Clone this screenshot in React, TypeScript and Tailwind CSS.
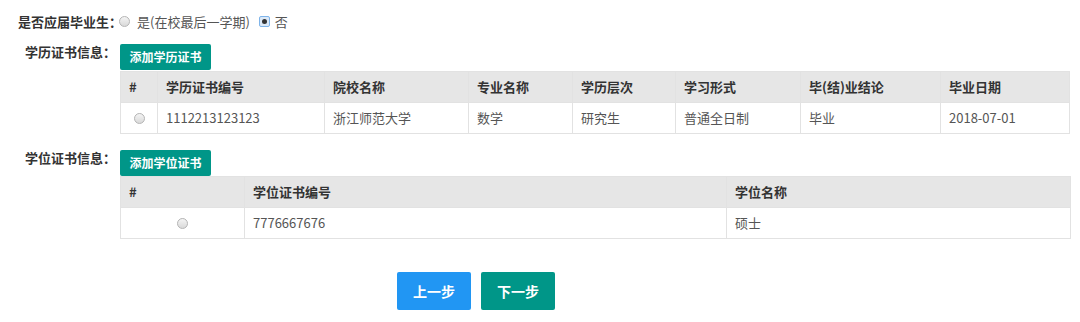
const font = { fontFamily: '"Noto Sans CJK SC", "Noto Sans", sans-serif' };

function Radio({ checked = false }: { checked?: boolean }) {
  if (checked) {
    return (
      <span className="inline-flex h-[11px] w-[11px] items-center justify-center rounded-[2px] border border-[#7eb4ea] bg-[#dce9f7]">
        <span className="h-[5px] w-[5px] rounded-full bg-[#333]" />
      </span>
    );
  }
  return (
    <span className="inline-block h-[11px] w-[11px] rounded-full border border-[#b5b5b5] bg-gradient-to-b from-[#f4f4f4] to-[#d9d9d9]" />
  );
}

function GreenButton({ children }: { children: React.ReactNode }) {
  return (
    <button className="flex h-[26px] w-[91px] items-center justify-center rounded-[2px] bg-[#009688] text-[12px] font-bold text-white">
      {children}
    </button>
  );
}

const eduCols = [
  { w: 37, t: "#" },
  { w: 167, t: "学历证书编号" },
  { w: 144, t: "院校名称" },
  { w: 104, t: "专业名称" },
  { w: 103, t: "学历层次" },
  { w: 125, t: "学习形式" },
  { w: 140, t: "毕(结)业结论" },
  { w: 129, t: "毕业日期" },
];
const eduRow = ["1112213123123", "浙江师范大学", "数学", "研究生", "普通全日制", "毕业", "2018-07-01"];

export default function App() {
  return (
    <div className="h-[322px] w-[1080px] bg-white text-[13px] text-[#333]" style={font}>
      <div className="flex h-[44px] items-center pb-[1px] pl-[18px]">
        <span className="font-bold">是否应届毕业生：</span>
        <span className="ml-[-3px] flex items-center">
          <Radio />
          <span className="ml-[7px] text-[#555]">是(在校最后一学期)</span>
          <span className="ml-[9px] flex"><Radio checked /></span>
          <span className="ml-[5px] text-[#555]">否</span>
        </span>
      </div>

      <div className="flex">
        <div className="mt-[-2px] w-[120px] shrink-0 pr-[4px] text-right font-bold">学历证书信息：</div>
        <div className="w-[950px]">
          <GreenButton>添加学历证书</GreenButton>
          <table className="mt-[1px] w-[950px] table-fixed border-collapse">
            <colgroup>
              {eduCols.map((c) => (
                <col key={c.t} style={{ width: c.w }} />
              ))}
            </colgroup>
            <thead>
              <tr className="h-[31px] bg-[#e6e6e6]">
                {eduCols.map((c) => (
                  <th key={c.t} className="border border-[#e2e2e2] px-[8px] text-left font-bold">
                    {c.t}
                  </th>
                ))}
              </tr>
            </thead>
            <tbody>
              <tr className="h-[31px] text-[#555]">
                <td className="border border-[#e2e2e2] text-center">
                  <span className="flex justify-center"><Radio /></span>
                </td>
                {eduRow.map((v) => (
                  <td key={v} className="border border-[#e2e2e2] px-[8px]">
                    {v}
                  </td>
                ))}
              </tr>
            </tbody>
          </table>
        </div>
      </div>

      <div className="mt-[16px] flex">
        <div className="mt-[-2px] w-[120px] shrink-0 pr-[4px] text-right font-bold">学位证书信息：</div>
        <div className="w-[950px]">
          <GreenButton>添加学位证书</GreenButton>
          <table className="w-[950px] table-fixed border-collapse">
            <colgroup>
              <col style={{ width: 124 }} />
              <col style={{ width: 482 }} />
              <col style={{ width: 344 }} />
            </colgroup>
            <thead>
              <tr className="h-[31px] bg-[#e6e6e6]">
                <th className="border border-[#e2e2e2] px-[8px] text-left font-bold">#</th>
                <th className="border border-[#e2e2e2] px-[8px] text-left font-bold">学位证书编号</th>
                <th className="border border-[#e2e2e2] px-[8px] text-left font-bold">学位名称</th>
              </tr>
            </thead>
            <tbody>
              <tr className="h-[31px] text-[#555]">
                <td className="border border-[#e2e2e2]">
                  <span className="flex justify-center"><Radio /></span>
                </td>
                <td className="border border-[#e2e2e2] px-[8px]">7776667676</td>
                <td className="border border-[#e2e2e2] px-[8px]">硕士</td>
              </tr>
            </tbody>
          </table>
        </div>
      </div>

      <div className="mt-[33px] flex gap-[10px] pl-[397px]">
        <button className="h-[38px] w-[74px] rounded-[2px] bg-[#2196f3] text-[14px] font-bold text-white">上一步</button>
        <button className="h-[38px] w-[74px] rounded-[2px] bg-[#009688] text-[14px] font-bold text-white">下一步</button>
      </div>
    </div>
  );
}
